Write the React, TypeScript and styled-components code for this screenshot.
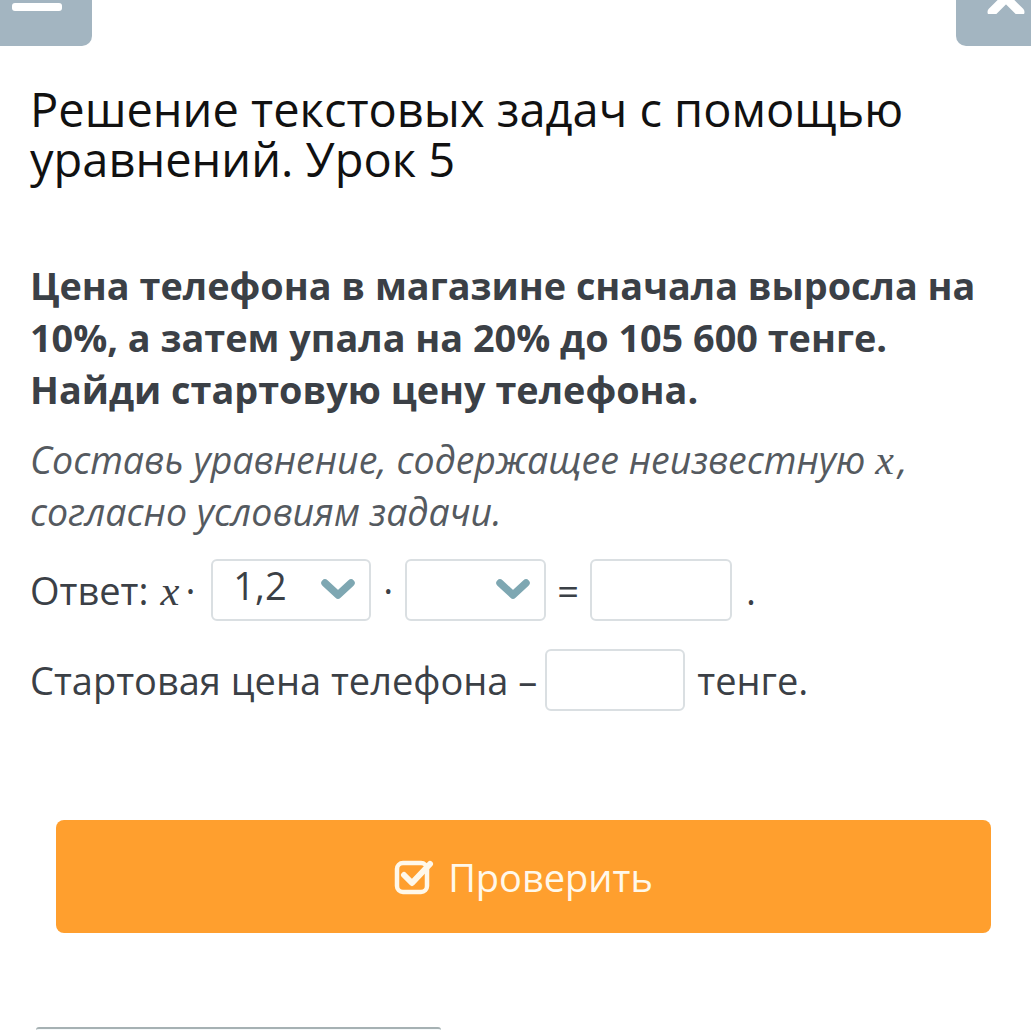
import React from "react";
import styled, { createGlobalStyle } from "styled-components";

const Global = createGlobalStyle`
  html, body { margin: 0; padding: 0; background: #fff; }
  body { font-family: "Open Sans", "Noto Sans", sans-serif; color: #3b4046; }
  * { box-sizing: border-box; }
`;

const Page = styled.div`
  width: 1031px;
  height: 1030px;
  overflow: hidden;
  display: flex;
  flex-direction: column;
`;

const TopBar = styled.div`
  display: flex;
  justify-content: space-between;
  align-items: flex-start;
  height: 46px;
`;

const CornerButton = styled.div<{ $side: "left" | "right"; $w: number }>`
  position: relative;
  width: ${(p) => p.$w}px;
  height: 46px;
  background: #a3b5c1;
  border-radius: ${(p) => (p.$side === "left" ? "0 0 10px 0" : "0 0 0 10px")};
  overflow: hidden;
`;

const MinusBar = styled.div`
  position: absolute;
  left: 12px;
  top: 3px;
  width: 50px;
  height: 8px;
  border-radius: 3px;
  background: #fff;
`;

const CloseIcon = styled.svg`
  position: absolute;
  left: 30px;
  top: -18px;
`;

const Content = styled.div`
  padding: 0 30px;
  display: flex;
  flex-direction: column;
`;

const Title = styled.h1`
  margin: 38px 0 0;
  font-weight: 400;
  font-size: 47px;
  line-height: 50px;
  color: #111;
`;

const Question = styled.p`
  margin: 76px 0 0;
  font-weight: 700;
  font-size: 37.8px;
  line-height: 52px;
  color: #3b4046;
`;

const Hint = styled.p`
  margin: 18px 0 0;
  font-style: italic;
  font-size: 37.5px;
  line-height: 51px;
  color: #555a60;
`;

const MathX = styled.span<{ $ml?: number; $mr?: number }>`
  font-family: "Liberation Serif", "DejaVu Serif", serif;
  font-style: italic;
  font-size: 1.12em;
  margin: 0 ${(p) => p.$mr ?? 4}px 0 ${(p) => p.$ml ?? 0}px;
`;

const Row = styled.div<{ $top: number }>`
  display: flex;
  align-items: center;
  margin-top: ${(p) => p.$top}px;
  font-size: 38px;
  color: #3b4046;
  height: 62px;
  white-space: nowrap;
`;

const Sym = styled.span<{ $mx?: number }>`
  margin: 0 ${(p) => p.$mx ?? 8}px;
`;

const SelectBox = styled.div<{ $w: number; $ml?: number }>`
  width: ${(p) => p.$w}px;
  height: 62px;
  margin-left: ${(p) => p.$ml ?? 0}px;
  border: 2px solid #dadfe2;
  border-radius: 6px;
  display: flex;
  align-items: center;
  justify-content: space-between;
  padding: 0 14px 0 20px;
  font-size: 38px;
  color: #3b4046;
  line-height: 1;
`;

const SelectValue = styled.span`
  margin-top: -10px;
`;

const InputBox = styled.div<{ $w: number; $ml?: number }>`
  width: ${(p) => p.$w}px;
  height: 62px;
  margin-left: ${(p) => p.$ml ?? 0}px;
  border: 2px solid #dadfe2;
  border-radius: 6px;
`;

const CheckButton = styled.button`
  margin: 109px 10px 0 26px;
  height: 113px;
  border: none;
  border-radius: 8px;
  background: #ff9f2e;
  color: #fff8ea;
  font-family: "Open Sans", "Noto Sans", sans-serif;
  font-size: 38px;
  display: flex;
  align-items: center;
  justify-content: center;
  gap: 14px;
`;

const BottomCard = styled.div`
  margin: 94px 0 0 6px;
  width: 405px;
  height: 10px;
  border-top: 2px solid #a6b1b3;
  background: #f6fafb;
  border-radius: 3px 3px 0 0;
`;

const Chevron = () => (
  <svg width="34" height="22" viewBox="0 0 34 22">
    <path d="M4 4 L17 16 L30 4" fill="none" stroke="#7ea7b2" strokeWidth="7.5" strokeLinecap="round" strokeLinejoin="round" />
  </svg>
);

const CheckSquare = () => (
  <svg width="40" height="36" viewBox="0 0 40 36">
    <rect x="3" y="4" width="30" height="29" rx="6" fill="none" stroke="#fff8ea" strokeWidth="4.5" />
    <path d="M10 16 L18 24 L36 5" fill="none" stroke="#fff8ea" strokeWidth="6" strokeLinecap="round" strokeLinejoin="round" />
  </svg>
);

export default function App() {
  return (
    <Page>
      <Global />
      <TopBar>
        <CornerButton $side="left" $w={92}>
          <MinusBar />
        </CornerButton>
        <CornerButton $side="right" $w={75}>
          <CloseIcon width="40" height="32" viewBox="0 0 40 32">
            <path d="M6 2 L34 30 M34 2 L6 30" fill="none" stroke="#fff" strokeWidth="9" strokeLinecap="round" />
          </CloseIcon>
        </CornerButton>
      </TopBar>
      <Content>
        <Title>
          Решение текстовых задач с помощью
          <br />
          уравнений. Урок 5
        </Title>
        <Question>
          Цена телефона в магазине сначала выросла на 10%, а затем упала на 20% до 105&nbsp;600 тенге.
          <br />
          Найди стартовую цену телефона.
        </Question>
        <Hint>
          Составь уравнение, содержащее неизвестную <MathX>x</MathX>, согласно условиям задачи.
        </Hint>
        <Row $top={22}>
          Ответ:<MathX $ml={12} $mr={6}>x</MathX>
          <Sym $mx={0}>·</Sym>
          <SelectBox $w={160} $ml={16}>
            <SelectValue>1,2</SelectValue>
            <Chevron />
          </SelectBox>
          <Sym $mx={12}>·</Sym>
          <SelectBox $w={141}>
            <span />
            <Chevron />
          </SelectBox>
          <Sym $mx={11}>=</Sym>
          <InputBox $w={142} />
          <Sym $mx={14}>.</Sym>
        </Row>
        <Row $top={28}>
          Стартовая цена телефона –
          <InputBox $w={140} $ml={8} />
          <Sym $mx={12}>тенге.</Sym>
        </Row>
        <CheckButton>
          <CheckSquare />
          Проверить
        </CheckButton>
        <BottomCard />
      </Content>
    </Page>
  );
}
